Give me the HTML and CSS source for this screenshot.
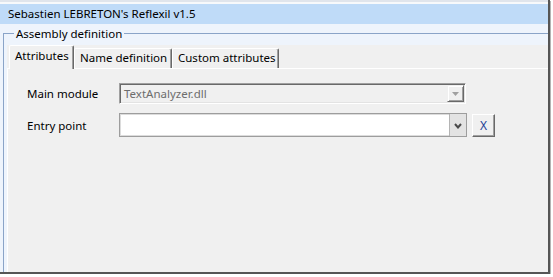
FILE: index.html
```html
<!DOCTYPE html>
<html>
<head>
<meta charset="utf-8">
<link rel="stylesheet" href="styles.css">
</head>
<body>
<div class="shot">
  <div class="top"></div>
  <div class="title">Sebastien LEBRETON's Reflexil v1.5</div>
  <div class="main">
    <fieldset class="group">
      <legend>Assembly definition</legend>
      <div class="tabctl">
        <div class="tabs">
          <div class="tab sel t1">Attributes</div>
          <div class="tab t2">Name definition</div>
          <div class="tab t3">Custom attributes</div>
        </div>
        <div class="page">
          <div class="form">
            <span class="lbl">Main module</span>
            <div class="combo dis">
              <span class="val">TextAnalyzer.dll</span>
              <span class="btn"><svg width="7" height="4" viewBox="0 0 7 4"><polygon points="0,0 7,0 3.5,4" fill="#a0a0a0"/></svg></span>
            </div>
            <span></span>
            <span class="lbl">Entry point</span>
            <div class="combo ent">
              <span class="val"></span>
              <span class="btn"><svg width="8" height="6" viewBox="0 0 8 6"><polyline points="1,1 4,4.5 7,1" fill="none" stroke="#4a4a4a" stroke-width="2"/></svg></span>
            </div>
            <button class="x">X</button>
          </div>
        </div>
      </div>
    </fieldset>
  </div>
</div>
</body>
</html>
```
FILE: styles.css
```css
* { box-sizing: border-box; }
body {
  margin: 0;
  background: #fff;
  font-family: "Segoe UI", "Noto Sans", sans-serif;
  font-size: 11.5px;
  color: #000;
}
.shot {
  width: 550px;
  height: 274px;
  border-right: 2px solid #555;
  border-bottom: 2px solid #555;
  box-shadow: 1px 1px 0 #b4b4b4;
  display: flex;
  flex-direction: column;
  background: #eef4fc;
  overflow: hidden;
}
.top {
  height: 4px;
  border-top: 2px solid #e0e5ec;
  background: #f7f9fb;
}
.title {
  height: 20px;
  padding: 1px 0 0 8px;
  line-height: 18px;
  background: #bfdbf8;
  white-space: nowrap;
}
.main {
  flex: 1;
  display: flex;
  flex-direction: column;
  padding: 1px 0 0 3px;
}
.group {
  flex: 1;
  margin: 0;
  padding: 3px 0 0 3px;
  border: 1px solid #8aa4c8;
  border-right: 0;
  border-bottom: 0;
  display: flex;
  flex-direction: column;
  min-width: 0;
}
.group legend {
  margin-left: 7px;
  padding: 0 2px;
  line-height: 17px;
}
.tabctl {
  flex: 1;
  background: #f0f0f0;
  display: flex;
  flex-direction: column;
}
.tabs {
  height: 23px;
  display: flex;
  align-items: flex-end;
  padding-left: 2px;
}
.tab {
  height: 20px;
  padding: 1px 0 0 5px;
  line-height: 16px;
  border: 1px solid #fff;
  border-bottom: 0;
  border-right-color: #696969;
  box-shadow: inset -1px 0 #a0a0a0;
  border-radius: 2px 2px 0 0;
  white-space: nowrap;
  background: #f0f0f0;
}
.tab.sel {
  height: 24px;
  margin-bottom: -1px;
  padding-top: 2px;
  position: relative;
  z-index: 1;
}
.t1 { width: 65px; }
.t2 { width: 98px; }
.t3 { width: 107px; }
.page {
  flex: 1;
  border-top: 1px solid #fff;
  border-left: 1px solid #fff;
  padding: 14px 0 0 19px;
}
.form {
  display: grid;
  grid-template-columns: 87px 348px auto;
  grid-template-rows: 21px 24px;
  row-gap: 9px;
  column-gap: 5px;
  align-items: center;
  justify-content: start;
}
.lbl { white-space: nowrap; }
.combo {
  height: 100%;
  display: flex;
  background: #fff;
}
.val {
  flex: 1;
  padding-left: 3px;
  display: flex;
  align-items: center;
  color: #6d6d6d;
}
.btn {
  width: 17px;
  display: flex;
  align-items: center;
  justify-content: center;
}
.combo.dis {
  width: 347px;
  border: 1px solid;
  border-color: #a0a0a0 #fff #fff #a0a0a0;
  box-shadow: inset 1px 1px #696969, inset -1px -1px #e3e3e3;
  background: #f0f0f0;
  padding: 1px;
}
.dis .btn {
  border: 1px solid;
  border-color: #f0f0f0 #696969 #696969 #f0f0f0;
  box-shadow: inset 1px 1px #fff, inset -1px -1px #a0a0a0;
  background: #f0f0f0;
}
.combo.ent {
  border: 1px solid #9d9d9d;
  box-shadow: inset 0 0 0 1px #dcdcdc;
}
.ent .btn {
  background: #e3e3e3;
  border-left: 1px solid #b4b4b4;
  padding-top: 1px;
}
.x {
  width: 23px;
  height: 23px;
  margin: 0;
  padding: 0;
  font: inherit;
  font-size: 12px;
  color: #1f3f95;
  background: #f0f0f0;
  border: 1px solid;
  border-color: #fff #696969 #696969 #fff;
  box-shadow: inset -1px -1px #a0a0a0;
}
```
